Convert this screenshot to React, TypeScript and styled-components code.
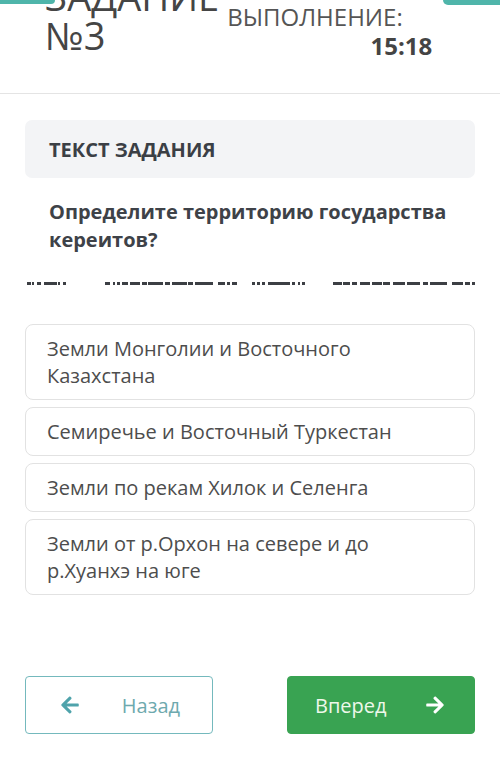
import styled, { createGlobalStyle } from "styled-components";
import { FaArrowLeft, FaArrowRight } from "react-icons/fa";

const Global = createGlobalStyle`
    body {
        margin: 0;
        background: #fff;
        font-family: "Open Sans", "Liberation Sans", sans-serif;
    }
`;

const Page = styled.div`
    width: 500px;
    height: 780px;
    position: relative;
    overflow: hidden;
    background: #fff;
`;
const Tab = styled.div<{ side: "left" | "right" }>`
    position: absolute;
    top: 0;
    ${(p) => (p.side === "left" ? "left: 0;" : "right: 0;")}
    width: ${(p) => (p.side === "left" ? "55px" : "57px")};
    height: ${(p) => (p.side === "left" ? "4px" : "5px")};
    background: #4fb5aa;
    border-radius: ${(p) => (p.side === "left" ? "0 0 6px 0" : "0 0 0 6px")};
`;
const Header = styled.div`
    height: 93px;
    border-bottom: 1px solid #e4e4e4;
    display: flex;
    align-items: flex-start;
    gap: 8px;
    padding-left: 45px;
    overflow: hidden;
`;
const Title = styled.div`
    margin-top: -23px;
    font-size: 38px;
    line-height: 39px;
    color: #454545;
    white-space: nowrap;
`;
const TimerCol = styled.div`
    width: 206px;
    display: flex;
    flex-direction: column;
    padding-top: 4px;
`;
const TimerLabel = styled.div`
    font-size: 24px;
    line-height: 26px;
    color: #555;
    white-space: nowrap;
`;
const TimerValue = styled.div`
    align-self: flex-end;
    margin-top: 3px;
    margin-right: 1px;
    font-size: 24px;
    line-height: 26px;
    font-weight: 700;
    color: #444;
`;
const Body = styled.div`
    padding: 0 25px;
`;
const TaskPanel = styled.div`
    margin-top: 26px;
    height: 58px;
    display: flex;
    align-items: center;
    padding-left: 24px;
    background: #f3f4f6;
    border-radius: 7px;
    font-size: 20px;
    font-weight: 700;
    color: #3b3f45;
`;
const Question = styled.div`
    margin-top: 20px;
    padding-left: 24px;
    font-size: 20px;
    line-height: 28px;
    font-weight: 700;
    color: #3e4248;
`;
const Cut = styled.svg`
    display: block;
    margin-top: 28px;
    width: 450px;
    height: 3px;
`;
const Options = styled.div`
    margin-top: 39px;
    display: flex;
    flex-direction: column;
    gap: 7px;
`;
const Option = styled.div`
    border: 1px solid #e2e2e2;
    border-radius: 8px;
    padding: 10px 60px 10px 21px;
    font-size: 20px;
    line-height: 27px;
    color: #4d4d4d;
`;
const Footer = styled.div`
    margin-top: 81px;
    padding: 0 25px;
    display: flex;
    justify-content: space-between;
`;
const NavButton = styled.div<{ primary?: boolean }>`
    width: 188px;
    height: 58px;
    box-sizing: border-box;
    display: flex;
    align-items: center;
    justify-content: space-between;
    padding: ${(p) => (p.primary ? "0 29px 0 27px" : "0 32px 0 34px")};
    border-radius: 4px;
    font-size: 20px;
    background: ${(p) => (p.primary ? "#39a352" : "#fff")};
    border: 1.5px solid ${(p) => (p.primary ? "#39a352" : "#74b9bd")};
    color: ${(p) => (p.primary ? "#eef8ea" : "#6ea9ae")};
    svg {
        font-size: 20px;
        color: ${(p) => (p.primary ? "#fff" : "#4fa3ab")};
    }
`;

const cuts = [
    [2, 4], [7, 2], [12, 4], [19, 13], [33, 2], [38, 3],
    [80, 5], [88, 2], [92, 3], [97, 6], [105, 10], [117, 5], [123, 15], [140, 5],
    [147, 15], [163, 5], [170, 18], [193, 7], [202, 3], [207, 5],
    [227, 3], [232, 3], [237, 3], [243, 22], [267, 3], [273, 2], [277, 3],
    [308, 9], [318, 7], [327, 5], [335, 10], [347, 10], [358, 7], [368, 12],
    [382, 13], [398, 5], [405, 17], [427, 11], [440, 5], [447, 3],
];

const options = [
    "Земли Монголии и Восточного Казахстана",
    "Семиречье и Восточный Туркестан",
    "Земли по рекам Хилок и Селенга",
    "Земли от р.Орхон на севере и до р.Хуанхэ на юге",
];

const App = () => {
    return (
        <Page>
            <Global />
            <Tab side="left" />
            <Tab side="right" />
            <Header>
                <Title>
                    ЗАДАНИЕ
                    <br />
                    №3
                </Title>
                <TimerCol>
                    <TimerLabel>ВЫПОЛНЕНИЕ:</TimerLabel>
                    <TimerValue>15:18</TimerValue>
                </TimerCol>
            </Header>
            <Body>
                <TaskPanel>ТЕКСТ ЗАДАНИЯ</TaskPanel>
                <Question>
                    Определите территорию государства
                    <br />
                    кереитов?
                </Question>
                <Cut viewBox="0 0 450 3">
                    {cuts.map(([x, w]) => (
                        <rect key={x} x={x} y={0} width={w} height={3} fill="#3c3f44" />
                    ))}
                </Cut>
                <Options>
                    {options.map((o) => (
                        <Option key={o}>{o}</Option>
                    ))}
                </Options>
            </Body>
            <Footer>
                <NavButton>
                    <FaArrowLeft />
                    <span>Назад</span>
                </NavButton>
                <NavButton primary>
                    <span>Вперед</span>
                    <FaArrowRight />
                </NavButton>
            </Footer>
        </Page>
    );
};
export default App;
